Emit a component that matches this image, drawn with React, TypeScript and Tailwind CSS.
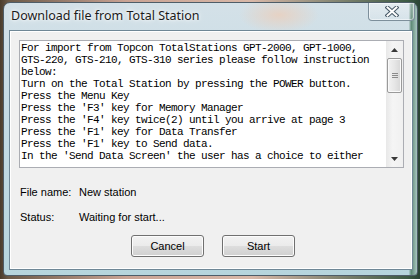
import React from "react";

const lines = [
  "For import from Topcon TotalStations GPT-2000, GPT-1000,",
  "GTS-220, GTS-210, GTS-310 series please follow instruction",
  "below:",
  "Turn on the Total Station by pressing the POWER button.",
  "Press the Menu Key",
  "Press the 'F3' key for Memory Manager",
  "Press the 'F4' key twice(2) until you arrive at page 3",
  "Press the 'F1' key for Data Transfer",
  "Press the 'F1' key to Send data.",
  "In the 'Send Data Screen' the user has a choice to either",
];

function Arrow({ up }: { up?: boolean }) {
  return (
    <svg width="7" height="4" viewBox="0 0 7 4" className="block">
      {up ? <path d="M3.5 0 L7 4 L0 4 Z" fill="#3a3a3a" /> : <path d="M0 0 L7 0 L3.5 4 Z" fill="#3a3a3a" />}
    </svg>
  );
}

function Button({ label }: { label: string }) {
  return (
    <button className="w-[73px] h-[22px] rounded-[3px] border border-[#707070] bg-[linear-gradient(180deg,#f2f2f2_0%,#ebebeb_48%,#dddddd_52%,#cfcfcf_100%)] shadow-[inset_0_0_0_1px_#fcfcfc] text-[11px] text-black font-['Liberation_Sans',sans-serif] leading-none">
      {label}
    </button>
  );
}

export default function App() {
  return (
    <div className="w-[420px] h-[279px] overflow-hidden flex pl-[3px] pt-[2px] pr-[2px] pb-[3px] bg-[linear-gradient(90deg,#4a3c2c_0%,#6b5a48_2%,#c9a394_30%,#d8b8a8_60%,#3c5a44_97%,#2a4434_100%)]">
      <div className="flex-1 flex flex-col rounded-t-[7px] rounded-b-[4px] border border-[#4e5d68] bg-[radial-gradient(ellipse_40px_18px_at_275px_12px,#e6d2c4,transparent),linear-gradient(90deg,transparent_0%,transparent_98%,#5f8a76_98.6%,#a8c6c0_100%),linear-gradient(180deg,#d4e1e8_0%,#c5dbe4_40%,#b6d5dd_100%)]">
        {/* Title bar */}
        <div className="h-[27px] flex items-start">
          <div className="ml-[7px] pt-[4px] text-[12.5px] text-[#1b1b1b] font-['Noto_Sans',sans-serif] leading-[17px] [text-shadow:0_0_6px_#ffffff,0_0_3px_#ffffff]">
            Download file from Total Station
          </div>
          <div className="ml-auto mr-[2px] w-[47px] h-[18px] rounded-b-[4px] border border-t-0 border-[#7d8f9b] bg-[linear-gradient(180deg,rgba(255,255,255,0.35),rgba(255,255,255,0.1))] shadow-[inset_0_0_0_1px_rgba(255,255,255,0.5)] flex items-center justify-center">
            <svg width="14" height="11" viewBox="0 0 14 11" className="block">
              <path d="M2.5 1.5 L11.5 9.5 M11.5 1.5 L2.5 9.5" stroke="#465866" strokeWidth="4" strokeLinecap="square" />
              <path d="M2.5 1.5 L11.5 9.5 M11.5 1.5 L2.5 9.5" stroke="#ffffff" strokeWidth="2" strokeLinecap="square" />
            </svg>
          </div>
        </div>

        {/* Client area */}
        <div className="flex-1 ml-[5px] mr-[4px] mb-[5px] border border-[#6f8796] bg-[#f0f0f0] shadow-[inset_0_0_0_1px_#ffffff] flex flex-col">
          <div className="mt-[9px] ml-[9px] mr-[8px] h-[128px] border border-[#abadb3] bg-white flex overflow-hidden">
            <div className="flex-1 pt-[1px] pl-[1px] font-['Liberation_Mono',monospace] text-[11px] tracking-[-0.6px] leading-[12px] text-black whitespace-pre overflow-hidden">
              {lines.map((l, i) => (
                <div key={i}>{l}</div>
              ))}
            </div>
            <div className="w-[17px] flex flex-col bg-[linear-gradient(90deg,#e8e8e8,#f5f5f5_40%,#f0f0f0)]">
              <div className="h-[17px] flex items-center justify-center">
                <Arrow up />
              </div>
              <div className="h-[35px] mx-[1px] rounded-[2px] border border-[#9a9a9a] bg-[linear-gradient(90deg,#f2f2f2,#e6e6e6_50%,#d6d6d6)] shadow-[inset_0_0_0_1px_#fafafa] flex flex-col items-center justify-center gap-[1px]">
                <div className="w-[6px] h-[1px] bg-[#8a8a8a]" />
                <div className="w-[6px] h-[1px] bg-[#8a8a8a]" />
                <div className="w-[6px] h-[1px] bg-[#8a8a8a]" />
              </div>
              <div className="flex-1" />
              <div className="h-[17px] flex items-center justify-center">
                <Arrow />
              </div>
            </div>
          </div>

          <div className="mt-[17px] ml-[10px] flex flex-col gap-[11px] font-['Liberation_Sans',sans-serif] text-[11px] leading-[14px] text-black">
            <div className="flex">
              <div className="w-[59px]">File name:</div>
              <div>New station</div>
            </div>
            <div className="flex">
              <div className="w-[59px]">Status:</div>
              <div>Waiting for start...</div>
            </div>
          </div>

          <div className="mt-[11px] ml-[121px] flex gap-[18px]">
            <Button label="Cancel" />
            <Button label="Start" />
          </div>
        </div>
      </div>
    </div>
  );
}
